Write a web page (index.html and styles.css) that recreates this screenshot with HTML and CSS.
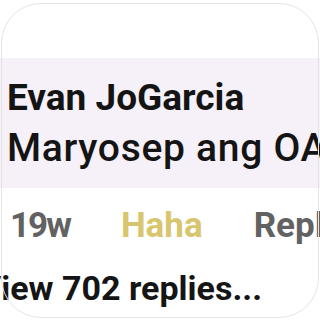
FILE: index.html
```html
<!DOCTYPE html>
<html>
<head>
<meta charset="utf-8">
<link rel="stylesheet" href="styles.css">
</head>
<body>
<div class="frame">
  <div class="bubble">
    <div class="name">Evan JoGarcia</div>
    <div class="text">Maryosep ang OA</div>
  </div>
  <div class="actions">
    <span class="time">19w</span>
    <span class="haha">Haha</span>
    <span class="reply">Reply</span>
  </div>
  <div class="replies">View 702 replies...</div>
</div>
</body>
</html>
```
FILE: styles.css
```css
html, body {
  margin: 0;
  padding: 0;
  background: #ffffff;
}
body {
  width: 320px;
  height: 320px;
  overflow: hidden;
  font-family: Roboto, "Liberation Sans", sans-serif;
  color: #141414;
}
.frame {
  position: relative;
  width: 320px;
  height: 320px;
  padding-top: 58px;
  box-sizing: border-box;
  overflow: hidden;
}
.frame::after {
  content: "";
  position: absolute;
  left: 1px;
  top: 3px;
  right: 1px;
  bottom: 2px;
  border: 1px solid #e4e4e4;
  border-radius: 40px;
  pointer-events: none;
}
.bubble {
  background: #f6f0f8;
  padding: 15px 0 15px 7px;
  white-space: nowrap;
  line-height: 50px;
}
.name {
  font-size: 37px;
  font-weight: 700;
}
.text {
  font-size: 39px;
  font-weight: 500;
  letter-spacing: 0.7px;
}
.actions {
  margin-top: 13px;
  display: flex;
  gap: 51px;
  padding-left: 10px;
  font-size: 35px;
  line-height: 50px;
  font-weight: 700;
  white-space: nowrap;
  color: #626262;
}
.time {
  letter-spacing: -2px;
}
.haha {
  color: #d8c66e;
}
.replies {
  margin-top: 12px;
  margin-left: -21px;
  font-size: 34px;
  line-height: 50px;
  font-weight: 700;
  white-space: nowrap;
  color: #151515;
}
```
